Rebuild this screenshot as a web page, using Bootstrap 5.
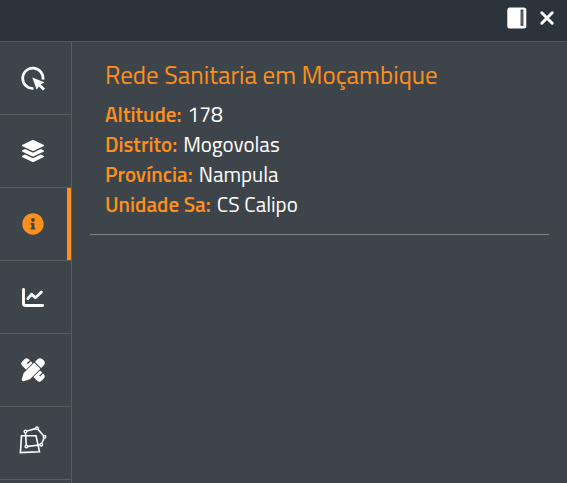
<!DOCTYPE html>
<html lang="pt">
<head>
<meta charset="utf-8">
<meta name="viewport" content="width=device-width, initial-scale=1">
<title>Rede Sanitaria em Moçambique</title>
<link href="https://cdn.jsdelivr.net/npm/bootstrap@5.3.0/dist/css/bootstrap.min.css" rel="stylesheet">
<style>
body { background: #3e454a; color: #fff; font-family: "Titillium Web", "Open Sans", sans-serif; }
.topbar { background: #2c343b; height: 42px; padding: 0 12px 5px; gap: 12px; border-bottom: 1px solid #53565a; }
.icon-btn { background: none; border: 0; color: inherit; padding: 0; display: flex; }
svg { overflow: visible; display: block; }
.side { width: 72px; border-right: 1px solid #5a5b5d; }
.tool { height: 73px; width: 71px; background: none; color: #fff; border: 0; border-bottom: 1px solid #5a5b5d; padding: 0 5px 0 0; display: flex; align-items: center; justify-content: center; }
.tool.current { color: #fd8f1d; box-shadow: inset -4px 0 #fd8f1d; }
.info { padding: 15px 18px; }
.record { padding: 0 15px 15px; border-bottom: 1px solid #808080; }
.heading { color: #fd8f1d; font-size: 25px; line-height: 36px; font-weight: 400; margin: 0 0 6px; }
.fields { font-size: 21px; line-height: 30px; }
.fields dt { color: #fd8f1d; font-weight: 600; }
.fields div { gap: 6px; }
</style>
<script src="https://cdn.jsdelivr.net/npm/bootstrap@5.3.0/dist/js/bootstrap.bundle.min.js"></script>
</head>
<body class="d-flex flex-column min-vh-100 overflow-hidden">
<header class="topbar d-flex align-items-center justify-content-end">
  <button class="icon-btn" type="button" aria-label="Painel"><svg width="20" height="22" viewBox="0 0 20 22"><rect x="0.3" y="0.4" width="19" height="21" rx="2.5" fill="#fff"/><rect x="14.2" y="3.2" width="1.6" height="15" fill="none" stroke="#2c343b" stroke-width="1.2"/></svg></button>
  <button class="icon-btn" type="button" aria-label="Fechar"><svg width="16" height="16" viewBox="0 0 16 16"><path d="M2.8 2.8l10.4 10.4M13.2 2.8L2.8 13.2" stroke="#fff" stroke-width="3" stroke-linecap="round"/></svg></button>
</header>
<div class="d-flex flex-grow-1">
  <nav class="side flex-shrink-0" aria-label="Ferramentas">
    <button class="tool" type="button" aria-label="Selecionar"><svg width="28" height="28" viewBox="0 0 28 28"><path d="M14.5 24.5A10.2 10.2 0 1 1 24 15.6" fill="none" stroke="#fff" stroke-width="2.7"/><path d="M13.3 13.4L25.4 18.2 21.8 20.4 26 24.5 24 26.5 19.8 22.4 17.7 25.7z" fill="#fff"/></svg></button>
    <button class="tool" type="button" aria-label="Camadas"><svg width="22" height="22" viewBox="0 0 512 512" fill="currentColor"><path d="M12.41 148.02l232.94 105.67c6.8 3.09 14.49 3.09 21.29 0l232.94-105.67c16.55-7.51 16.55-32.52 0-40.03L266.65 2.31a25.607 25.607 0 0 0-21.29 0L12.41 107.98c-16.55 7.51-16.55 32.53 0 40.04zm487.18 88.28l-58.09-26.33-161.64 73.27c-7.56 3.43-15.59 5.17-23.86 5.17s-16.29-1.74-23.86-5.17L70.51 209.97l-58.1 26.33c-16.55 7.5-16.55 32.5 0 40l232.94 105.59c6.8 3.08 14.49 3.08 21.29 0L499.59 276.3c16.55-7.5 16.55-32.5 0-40zm0 127.8l-57.87-26.23-161.86 73.37c-7.56 3.43-15.59 5.17-23.86 5.17s-16.29-1.74-23.86-5.17L70.29 337.87 12.41 364.1c-16.55 7.5-16.55 32.5 0 40l232.94 105.59c6.8 3.08 14.49 3.08 21.29 0L499.59 404.1c16.55-7.5 16.55-32.5 0-40z"/></svg></button>
    <button class="tool current" type="button" aria-label="Informação" aria-pressed="true"><svg width="22" height="22" viewBox="0 0 512 512" fill="currentColor"><path d="M256 8C119.043 8 8 119.083 8 256c0 136.997 111.043 248 248 248s248-111.003 248-248C504 119.083 392.957 8 256 8zm0 110c23.196 0 42 18.804 42 42s-18.804 42-42 42-42-18.804-42-42 18.804-42 42-42zm56 254c0 6.627-5.373 12-12 12h-88c-6.627 0-12-5.373-12-12v-24c0-6.627 5.373-12 12-12h12v-64h-12c-6.627 0-12-5.373-12-12v-24c0-6.627 5.373-12 12-12h64c6.627 0 12 5.373 12 12v100h12c6.627 0 12 5.373 12 12v24z"/></svg></button>
    <button class="tool" type="button" aria-label="Gráfico"><svg width="28" height="28" viewBox="0 0 28 28" fill="none" stroke="#fff" stroke-linecap="round" stroke-linejoin="round"><path d="M4.5 6.5V20.5Q4.5 22.5 6.5 22.5H23.6" stroke-width="2.9"/><path d="M8.8 15.6L12.6 11.3 16.4 14.7 22.4 8.9" stroke-width="2.8"/></svg></button>
    <button class="tool" type="button" aria-label="Desenhar"><svg width="28" height="28" viewBox="0 0 28 28" fill="#fff"><g transform="rotate(45 14 14)"><rect x="0.4" y="9.4" width="27.2" height="9.2" rx="3"/><path d="M5.6 9v4.6M23 9v4.6" stroke="#3e454a" stroke-width="1.2"/></g><g transform="rotate(-45 14 14)"><path d="M-1.4 14L-0.6 12.6L5.2 9.6H24.6Q28.4 9.6 28.4 14T24.6 18.4H5.2L-0.6 15.4z" stroke="#3e454a" stroke-width="1.6" paint-order="stroke"/><path d="M20.6 9v10" stroke="#3e454a" stroke-width="1"/></g></svg></button>
    <button class="tool" type="button" aria-label="Polígonos"><svg width="28" height="28" viewBox="0 0 28 28" fill="none" stroke="#fff" stroke-width="1.6"><path d="M2.5 6.7H17L20.5 22.8 1.4 23.6z"/><path d="M6.4 2.6L18-0.8 25.5 7.8 22.2 15.7 7.4 17.6z"/><g fill="#3e454a" stroke-width="1.4"><circle cx="6.4" cy="2.6" r="1.3"/><circle cx="18" cy="-0.8" r="1.3"/><circle cx="25.5" cy="7.8" r="1.3"/><circle cx="22.2" cy="15.7" r="1.3"/><circle cx="7.4" cy="17.6" r="1.3"/></g></svg></button>
  </nav>
  <main class="info flex-grow-1">
    <section class="record">
      <h1 class="heading">Rede Sanitaria em Moçambique</h1>
      <dl class="fields mb-0">
        <div class="d-flex"><dt>Altitude:</dt><dd class="mb-0">178</dd></div>
        <div class="d-flex"><dt>Distrito:</dt><dd class="mb-0">Mogovolas</dd></div>
        <div class="d-flex"><dt>Província:</dt><dd class="mb-0">Nampula</dd></div>
        <div class="d-flex"><dt>Unidade Sa:</dt><dd class="mb-0">CS Calipo</dd></div>
      </dl>
    </section>
  </main>
</div>
</body>
</html>
